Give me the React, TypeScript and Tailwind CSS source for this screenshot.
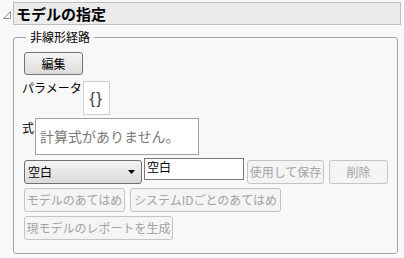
import React from "react";

const font = { fontFamily: '"Noto Sans CJK JP", "Noto Sans", sans-serif' };

function DisabledBtn({ children, className = "" }: { children: React.ReactNode; className?: string }) {
  return (
    <div
      className={`h-[24px] flex items-center justify-center rounded-[3px] border border-[#c4c4c4] bg-[#f4f4f4] text-[12px] text-[#a3a3a3] whitespace-nowrap overflow-visible ${className}`}
    >
      {children}
    </div>
  );
}

export default function App() {
  return (
    <div className="w-[404px] h-[258px] bg-[#f8f8f8] overflow-hidden text-black" style={font}>
      <div className="flex items-start pt-[2px]">
        <div className="w-[13px] h-[22px] flex items-center justify-center">
          <svg width="10" height="10" viewBox="0 0 10 10" className="mt-[3px]">
            <path d="M8.5 1.5 L8.5 8.5 L1.5 8.5 Z" fill="none" stroke="#8a8a8a" strokeWidth="1" />
          </svg>
        </div>
        <div className="flex-1 mr-[3px] h-[23px] border border-[#bdbdbd] bg-[#ebebeb] flex items-center pl-[2px]">
          <span className="text-[15px] font-bold leading-none">モデルの指定</span>
        </div>
      </div>
      <fieldset className="ml-[13px] mr-[6px] mt-[5px] h-[224px] border border-[#a6a6a6] rounded-[3px] pl-[8px] pr-[8px]">
        <legend className="ml-[4px] px-[4px] text-[12px] leading-[14px]">非線形経路</legend>
        <div className="pl-[2px] mt-[8px]">
          <div className="w-[59px] h-[23px] rounded-[3px] border border-[#767676] bg-gradient-to-b from-[#f4f4f4] to-[#dcdcdc] flex items-center justify-center text-[12px]">
            編集
          </div>
        </div>
        <div className="flex items-start mt-[6px]">
          <span className="text-[12px] leading-[14px]">パラメータ</span>
          <div className="ml-[1px] w-[27px] h-[34px] border border-[#cfcfcf] bg-white flex items-center justify-center">
            <span
              className="text-[17px] leading-none tracking-[1px] text-[#444]"
              style={{ fontFamily: '"Liberation Sans", sans-serif' }}
            >
              {"{}"}
            </span>
          </div>
        </div>
        <div className="flex items-start mt-[3px]">
          <span className="text-[12px] leading-[14px] mt-[3px]">式</span>
          <div className="ml-[1px] w-[164px] h-[37px] border border-[#a0a0a0] bg-white flex items-center pl-[4px] text-[14px] text-[#7a7a7a]">
            計算式がありません。
          </div>
        </div>
        <div className="flex items-start mt-[3px] pl-[2px]">
          <div className="mt-[2px] w-[118px] h-[24px] rounded-[3px] border border-[#6f6f6f] bg-gradient-to-b from-[#f4f4f4] to-[#dadada] flex items-center justify-between pl-[3px] pr-[6px] text-[12px]">
            <span>空白</span>
            <svg width="7" height="4" viewBox="0 0 7 4">
              <path d="M0 0 L7 0 L3.5 4 Z" fill="#000" />
            </svg>
          </div>
          <div className="ml-[2px] w-[100px] h-[22px] border border-[#7a7a7a] bg-white text-[12px] leading-[16px] pl-[2px]">
            空白
          </div>
          <DisabledBtn className="ml-[3px] mt-[2px] w-[77px]">使用して保存</DisabledBtn>
          <DisabledBtn className="ml-[5px] mt-[2px] w-[59px]">削除</DisabledBtn>
        </div>
        <div className="flex mt-[4px] pl-[2px] gap-[5px]">
          <DisabledBtn className="w-[101px]">モデルのあてはめ</DisabledBtn>
          <DisabledBtn className="w-[151px]">システムIDごとのあてはめ</DisabledBtn>
        </div>
        <div className="flex mt-[4px] pl-[2px]">
          <DisabledBtn className="w-[149px]">現モデルのレポートを生成</DisabledBtn>
        </div>
      </fieldset>
    </div>
  );
}
